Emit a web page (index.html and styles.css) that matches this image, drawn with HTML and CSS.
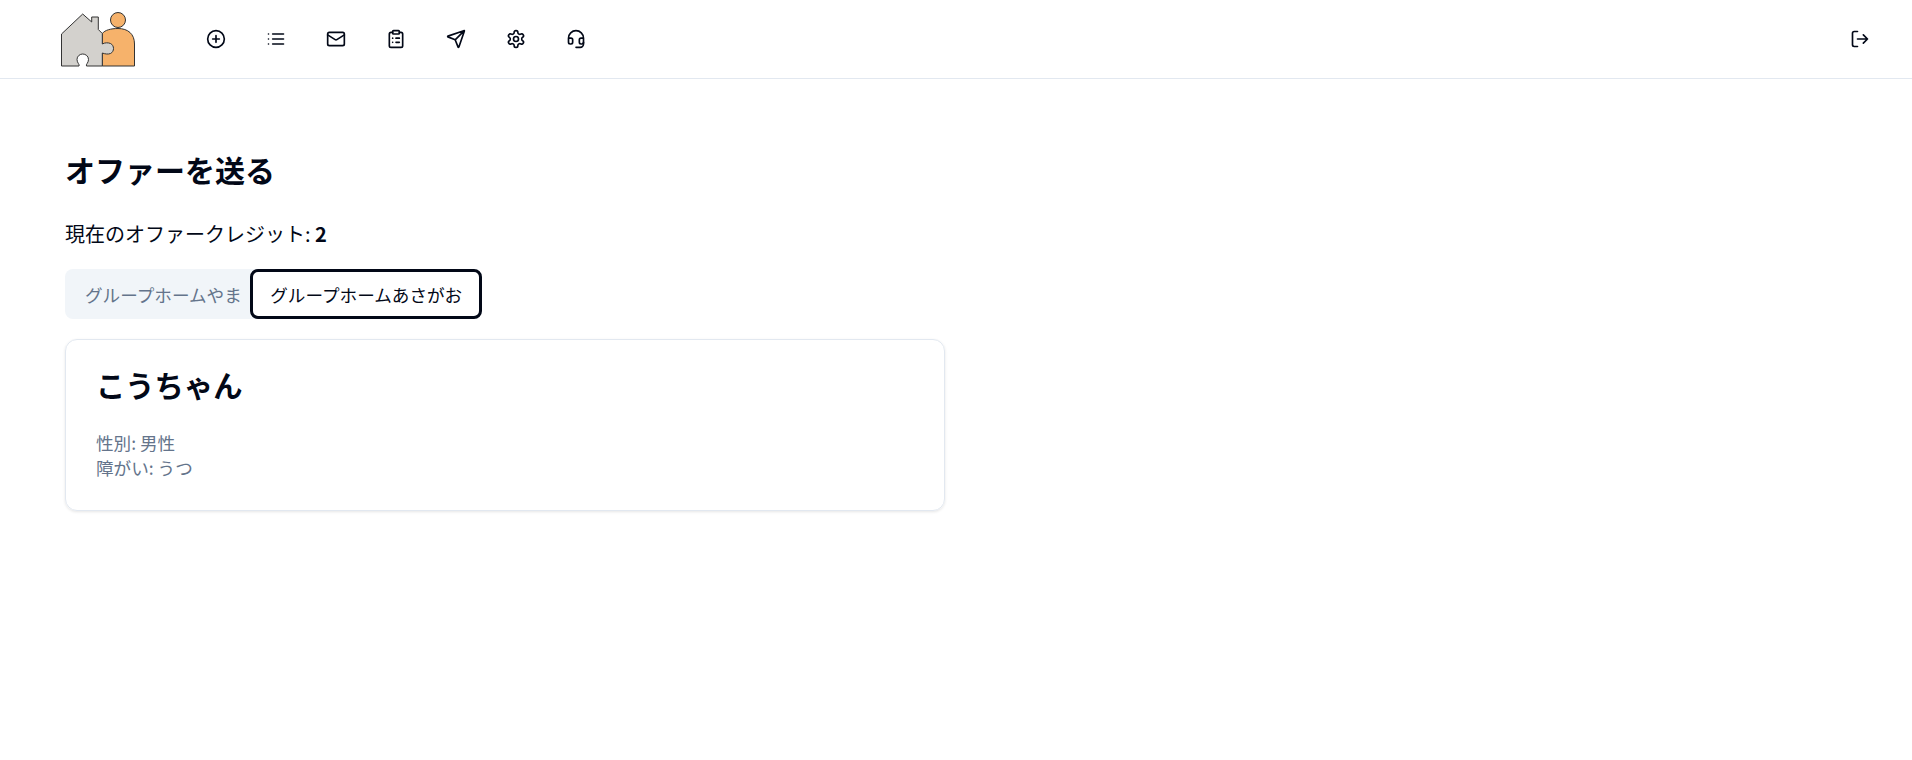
FILE: index.html
```html
<!DOCTYPE html>
<html lang="ja">
<head>
    <meta charset="UTF-8">
    <title>オファーを送る</title>
    <link rel="stylesheet" href="styles.css">
</head>
<body>
    <header class="header">
        <div class="nav">
            <svg class="logo" viewBox="0 0 74 55" width="74" height="55">
                <!-- 人 -->
                <circle cx="57" cy="8" r="7.500" fill="#f6b26b" stroke="#333" stroke-width="1"/>
                <path d="M41.300 21.500C44 18 50 16.500 57 16.500C67 16.500 73.500 22 73.500 32V54H41.300Z" fill="#f6b26b" stroke="#333" stroke-width="1"/>
                <!-- 家 -->
                <path d="M0.500 22L21.700 2L30.700 10V5H37.300V17.500L41.300 21.500V32C44 30.500 47 30.500 49.500 31.500C53.500 33.500 53.500 39.500 49.500 41.500C47 42.500 44 42 41.300 41V54H25.500C24.500 52.500 27.500 51 27.500 47.500C27.500 44 24.500 42 21.700 42C19 42 16 44 16 47.500C16 51 19 52.500 18 54H0.500Z" fill="#d3d1cd" stroke="#333" stroke-width="1"/>
            </svg>
            <div class="nav-icons">
                <svg class="icon" viewBox="0 0 24 24"><circle cx="12" cy="12" r="10"/><path d="M8 12h8M12 8v8"/></svg>
                <svg class="icon" viewBox="0 0 24 24"><path d="M3 6h.01M3 12h.01M3 18h.01M8 6h13M8 12h13M8 18h13"/></svg>
                <svg class="icon" viewBox="0 0 24 24"><rect x="2" y="4" width="20" height="16" rx="2"/><path d="M22 7l-8.970 5.700a1.940 1.940 0 0 1-2.060 0L2 7"/></svg>
                <svg class="icon" viewBox="0 0 24 24"><rect x="8" y="2" width="8" height="4" rx="1"/><path d="M16 4h2a2 2 0 0 1 2 2v14a2 2 0 0 1-2 2H6a2 2 0 0 1-2-2V6a2 2 0 0 1 2-2h2M12 11h4M12 16h4M8 11h.01M8 16h.01"/></svg>
                <svg class="icon" viewBox="0 0 24 24"><path d="M22 2L11 13M14.536 21.686a.5.5 0 0 0 .937-.024l6.500-19a.496.496 0 0 0-.635-.635l-19 6.500a.5.5 0 0 0-.024.937l7.930 3.180a2 2 0 0 1 1.112 1.110z"/></svg>
                <svg class="icon" viewBox="0 0 24 24"><path d="M12.220 2h-.440a2 2 0 0 0-2 2v.180a2 2 0 0 1-1 1.730l-.430.250a2 2 0 0 1-2 0l-.150-.080a2 2 0 0 0-2.730.730l-.220.380a2 2 0 0 0 .730 2.730l.150.100a2 2 0 0 1 1 1.720v.510a2 2 0 0 1-1 1.740l-.150.090a2 2 0 0 0-.730 2.730l.220.380a2 2 0 0 0 2.730.730l.150-.080a2 2 0 0 1 2 0l.430.250a2 2 0 0 1 1 1.730V20a2 2 0 0 0 2 2h.440a2 2 0 0 0 2-2v-.180a2 2 0 0 1 1-1.730l.430-.250a2 2 0 0 1 2 0l.150.080a2 2 0 0 0 2.730-.730l.220-.390a2 2 0 0 0-.730-2.730l-.150-.080a2 2 0 0 1-1-1.740v-.500a2 2 0 0 1 1-1.740l.150-.090a2 2 0 0 0 .730-2.730l-.220-.380a2 2 0 0 0-2.730-.730l-.150.080a2 2 0 0 1-2 0l-.430-.250a2 2 0 0 1-1-1.730V4a2 2 0 0 0-2-2z"/><circle cx="12" cy="12" r="3"/></svg>
                <svg class="icon" viewBox="0 0 24 24"><path d="M3 11h3a2 2 0 0 1 2 2v3a2 2 0 0 1-2 2H5a2 2 0 0 1-2-2v-5zm0 0a9 9 0 1 1 18 0m0 0v5a2 2 0 0 1-2 2h-1a2 2 0 0 1-2-2v-3a2 2 0 0 1 2-2h3z"/><path d="M21 16v2a4 4 0 0 1-4 4h-5"/></svg>
            </div>
        </div>
        <svg class="icon" viewBox="0 0 24 24"><path d="M9 21H5a2 2 0 0 1-2-2V5a2 2 0 0 1 2-2h4M16 17l5-5-5-5M21 12H9"/></svg>
    </header>

    <main class="main">
        <h1>オファーを送る</h1>
        <p class="credit">現在のオファークレジット: <strong>2</strong></p>
        <div class="tabs">
            <button class="tab">グループホームやま</button>
            <button class="tab active">グループホームあさがお</button>
        </div>
        <div class="card">
            <h2>こうちゃん</h2>
            <div class="info">
                <p>性別: 男性</p>
                <p>障がい: うつ</p>
            </div>
        </div>
    </main>
</body>
</html>
```

FILE: styles.css
```css
* {
    margin: 0;
    padding: 0;
    box-sizing: border-box;
}

body {
    font-family: "Noto Sans CJK JP", "Noto Sans", sans-serif;
    color: #020817;
    background-color: #fff;
    height: 760px;
    overflow: hidden;
}

.header {
    height: 79px;
    display: flex;
    justify-content: space-between;
    align-items: center;
    padding: 0 42px 0 61px;
    border-bottom: 1px solid #e2e8f0;
}

.nav {
    display: flex;
    align-items: center;
    gap: 71px;
}

.nav-icons {
    display: flex;
    gap: 40px;
}

.icon {
    width: 20px;
    height: 20px;
    fill: none;
    stroke: #020817;
    stroke-width: 2;
    stroke-linecap: round;
    stroke-linejoin: round;
    display: block;
}

.main {
    width: 880px;
    margin-left: 65px;
    padding-top: 70px;
}

h1 {
    font-size: 30px;
    font-weight: 700;
    line-height: 40px;
}

.credit {
    font-size: 20px;
    line-height: 28px;
    margin-top: 31px;
    margin-bottom: 21px;
    color: #020817;
}

.tabs {
    display: flex;
    width: fit-content;
    background-color: #f1f5f9;
    border-radius: 8px;
    height: 50px;
}

.tab {
    font-family: inherit;
    font-size: 17.600px;
    padding: 0 8.500px 0 20px;
    border: none;
    background: none;
    color: #64748b;
    border-radius: 8px;
}

.tab.active {
    background-color: #fff;
    color: #020817;
    border: 3px solid #020817;
    padding: 0 17px;
}

.card {
    margin-top: 20px;
    height: 172px;
    padding: 26px 30px;
    border: 1px solid #e2e8f0;
    border-radius: 12px;
    box-shadow: 0 1px 3px rgba(0, 0, 0, 0.1);
}

h2 {
    font-size: 29.300px;
    font-weight: 700;
    line-height: 36px;
}

.info {
    margin-top: 28px;
    font-size: 17.600px;
    line-height: 25px;
    color: #64748b;
}
```
